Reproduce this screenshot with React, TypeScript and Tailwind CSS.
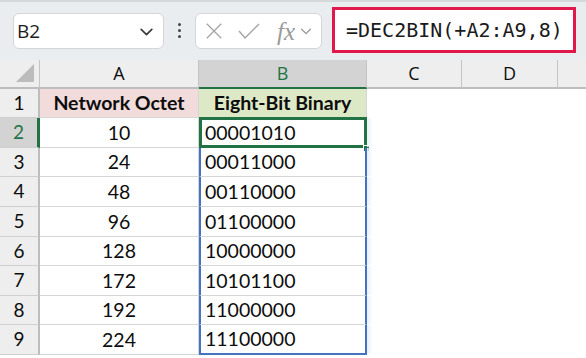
import React from "react";

const rows = [
  { n: 1, a: "Network Octet", b: "Eight-Bit Binary", h: "h-[29px]" },
  { n: 2, a: "10", b: "00001010", h: "h-[30px]" },
  { n: 3, a: "24", b: "00011000", h: "h-[29px]" },
  { n: 4, a: "48", b: "00110000", h: "h-[30px]" },
  { n: 5, a: "96", b: "01100000", h: "h-[30px]" },
  { n: 6, a: "128", b: "10000000", h: "h-[29px]" },
  { n: 7, a: "172", b: "10101100", h: "h-[30px]" },
  { n: 8, a: "192", b: "11000000", h: "h-[29px]" },
  { n: 9, a: "224", b: "11100000", h: "h-[30px]" },
];

function Chevron({ className }: { className?: string }) {
  return (
    <svg viewBox="0 0 16 16" className={className} fill="none" stroke="currentColor" strokeWidth="1.6">
      <path d="M3 6l5 5 5-5" strokeLinecap="round" strokeLinejoin="round" />
    </svg>
  );
}

function FormulaBar() {
  return (
    <div className="h-[60px] bg-[#eaedf0] border-t-2 border-[#d6d9dc] flex items-start">
      <div className="mt-[11px] ml-[13px] w-[151px] h-[36px] bg-white border border-[#d3d5d8] rounded-[6px] flex items-center pl-[3px] pr-[8px]">
        <span className="flex-1 text-[19px] text-[#1b1b1b] font-['Open_Sans',sans-serif]">B2</span>
        <Chevron className="w-[17px] h-[17px] text-[#3b3b3b]" />
      </div>
      <div className="mt-[21px] ml-[14px] flex flex-col gap-[3px]">
        <div className="w-[3px] h-[3px] bg-[#444] rounded-full" />
        <div className="w-[3px] h-[3px] bg-[#444] rounded-full" />
        <div className="w-[3px] h-[3px] bg-[#444] rounded-full" />
      </div>
      <div className="mt-[11px] ml-[14px] w-[127px] h-[36px] bg-white border border-[#d3d5d8] rounded-[6px] flex items-center pl-[9px] text-[#a3a3a3]">
        <svg viewBox="0 0 20 20" className="w-[18px] h-[18px]" fill="none" stroke="currentColor" strokeWidth="1.4">
          <path d="M2 2l16 16M18 2L2 18" />
        </svg>
        <svg viewBox="0 0 22 18" className="w-[22px] h-[18px] ml-[15px]" fill="none" stroke="currentColor" strokeWidth="1.4">
          <path d="M1 9l6 7L21 2" />
        </svg>
        <span className="ml-[17px] text-[25px] italic font-['Liberation_Serif',serif] text-[#9a9a9a] leading-none">fx</span>
        <Chevron className="w-[14px] h-[14px] ml-[4px] text-[#9a9a9a]" />
      </div>
      <div className="mt-[5px] ml-[10px] w-[244px] h-[46px] bg-white border-[3px] border-[#e0184c] flex items-center pl-[11px]">
        <span className="text-[20px] text-[#1a1a1a] font-['DejaVu_Sans_Mono',monospace]">=DEC2BIN(+A2:A9,8)</span>
      </div>
    </div>
  );
}

export default function App() {
  return (
    <div className="w-[586px] h-[358px] overflow-hidden bg-white font-['Lato',sans-serif] text-[#0d0d0d]">
      <FormulaBar />
      <div className="grid grid-cols-[40px_159px_168px_95px_96px_1fr]">
        <div className="h-[29px] bg-[#eeeeee] border-r border-[#c4c4c4] border-b-2 border-b-[#bdbdbd] relative">
          <div className="absolute right-[5px] bottom-[5px] w-0 h-0 border-l-[18px] border-l-transparent border-b-[18px] border-b-[#bcbcbc]" />
        </div>
        <div className="h-[29px] bg-[#eeeeee] border-r border-[#c4c4c4] border-b-2 border-b-[#bdbdbd] flex items-center justify-center text-[18px] font-['Open_Sans',sans-serif]">A</div>
        <div className="h-[29px] bg-[#d3d3d3] border-r border-[#c4c4c4] border-b-2 border-b-[#217346] flex items-center justify-center text-[18px] text-[#217346] font-['Open_Sans',sans-serif]">B</div>
        <div className="h-[29px] bg-[#eeeeee] border-r border-[#c4c4c4] border-b-2 border-b-[#bdbdbd] flex items-center justify-center text-[18px] font-['Open_Sans',sans-serif]">C</div>
        <div className="h-[29px] bg-[#eeeeee] border-r border-[#c4c4c4] border-b-2 border-b-[#bdbdbd] flex items-center justify-center text-[18px] font-['Open_Sans',sans-serif]">D</div>
        <div className="h-[29px] bg-[#eeeeee] border-b-2 border-b-[#bdbdbd]" />

        {rows.map((r) => {
          const sel = r.n === 2;
          const header = r.n === 1;
          const last = r.n === 9;
          let bClass = "";
          if (header) {
            bClass = "bg-[#dde8c6] font-bold justify-center border-r border-b border-[#d6d6d6]";
          } else if (last) {
            bClass = "pl-[4px] border-2 border-[#4472c4] border-t-0";
          } else {
            bClass = "pl-[4px] border-x-2 border-x-[#4472c4] border-b border-b-[#d6d6d6]";
          }
          return (
            <React.Fragment key={r.n}>
              <div
                className={`${r.h} flex items-center justify-center text-[19px] border-b border-[#cfcfcf] ${
                  sel
                    ? "bg-[#d3d3d3] text-[#217346] border-r-[3px] border-r-[#217346]"
                    : "bg-[#eeeeee] border-r-2 border-r-[#bdbdbd]"
                }`}
              >
                {r.n}
              </div>
              <div
                className={`${r.h} flex items-center justify-center text-[19.5px] border-r border-b border-[#d6d6d6] ${
                  header ? "bg-[#f2dcdb] font-bold" : ""
                }`}
              >
                {r.a}
              </div>
              <div className={`${r.h} relative flex items-center text-[19.5px] ${bClass}`}>
                {r.b}
                {sel && (
                  <>
                    <div className="absolute -left-[2px] -top-[1px] -right-[2px] -bottom-[1px] border-[3px] border-[#217346]" />
                    <div className="absolute -right-[5px] -bottom-[5px] w-[7px] h-[7px] bg-[#217346] border border-white" />
                  </>
                )}
                {!header && (
                  <div className="absolute -right-[8px] top-0 bottom-0 w-[6px] bg-gradient-to-r from-[#eaf0f8] to-transparent" />
                )}
              </div>
              <div className={r.h} />
              <div className={r.h} />
              <div className={r.h} />
            </React.Fragment>
          );
        })}
      </div>
    </div>
  );
}
